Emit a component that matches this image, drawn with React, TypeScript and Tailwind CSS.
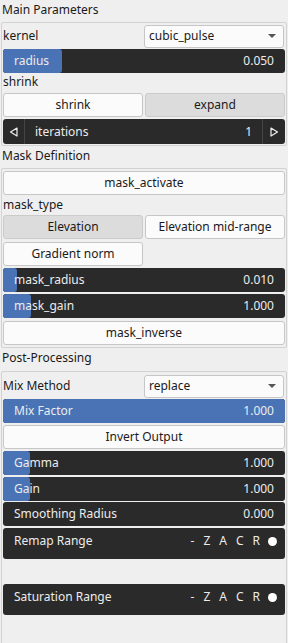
import React from "react";

const Header = ({ children, h = "h-[22px]" }: { children: React.ReactNode; h?: string }) => (
  <div className={`${h} px-[2px] pt-[2px] leading-[16px] text-[#1a1a1a]`}>{children}</div>
);

const Group = ({ children, className = "" }: { children: React.ReactNode; className?: string }) => (
  <div className={`mx-[1px] border border-[#d2d2d2] rounded-[2px] px-[1px] flex flex-col ${className}`}>{children}</div>
);

const Button = ({ children, pressed = false, className = "" }: { children: React.ReactNode; pressed?: boolean; className?: string }) => (
  <div
    className={`h-[24px] flex items-center justify-center rounded-[3px] border ${
      pressed ? "bg-[#dcdcdc] border-[#cbcbcb]" : "bg-[#fbfbfb] border-[#c6c6c6]"
    } text-[#1a1a1a] ${className}`}
  >
    {children}
  </div>
);

const Slider = ({ label, value, fill }: { label: string; value: string; fill: number }) => (
  <div className="relative h-[24px] rounded-[3px] bg-[#2a2a2a] overflow-hidden flex items-center text-[#ececec]">
    <div className="absolute left-0 top-0 bottom-0 bg-[#4a73b5] rounded-[3px]" style={{ width: fill }} />
    <span className="relative pl-[11px]">{label}</span>
    <span className="relative ml-auto pr-[11px]">{value}</span>
  </div>
);

const Combo = ({ label, value }: { label: string; value: string }) => (
  <div className="h-[24px] flex items-center">
    <span className="flex-1 pl-[0px] text-[#1a1a1a]">{label}</span>
    <div className="w-[140px] h-[23px] mr-[1px] rounded-[3px] border border-[#c6c6c6] bg-[#fbfbfb] flex items-center pl-[4px] pr-[7px] text-[#1a1a1a]">
      <span className="flex-1">{value}</span>
      <svg width="8" height="5" viewBox="0 0 8 5">
        <path d="M0 0 L8 0 L4 4 Z" fill="#555" />
      </svg>
    </div>
  </div>
);

const Range = ({ label }: { label: string }) => (
  <div className="h-[31px] rounded-[3px] bg-[#2a2a2a] flex items-start pt-[5px] text-[#ececec]">
    <span className="pl-[11px] leading-[16px]">{label}</span>
    <span className="ml-auto flex items-center gap-[9px] pr-[8px] leading-[16px]">
      <span>-</span>
      <span>Z</span>
      <span>A</span>
      <span>C</span>
      <span>R</span>
      <span className="w-[9px] h-[9px] rounded-full bg-white inline-block ml-[-1px]" />
    </span>
  </div>
);

export default function App() {
  return (
    <div
      className="w-[288px] h-[643px] bg-[#efefef] overflow-hidden text-[12px]"
      style={{ fontFamily: '"Noto Sans", "Open Sans", sans-serif' }}
    >
      <Header>Main Parameters</Header>
      <Group className="pt-[1px] pb-[1px]">
        <Combo label="kernel" value="cubic_pulse" />
        <div className="mt-[1px]">
          <Slider label="radius" value="0.050" fill={59} />
        </div>
        <div className="h-[20px] leading-[18px] text-[#1a1a1a]">shrink</div>
        <div className="grid grid-cols-2 gap-[2px]">
          <Button>shrink</Button>
          <Button pressed>expand</Button>
        </div>
        <div className="mt-[2px] h-[25px] rounded-[3px] bg-[#2a2a2a] flex items-center text-[#ececec]">
          <div className="w-[22px] h-full flex items-center justify-center border-r border-[#444]">
            <svg width="9" height="10" viewBox="0 0 9 10">
              <path d="M8 1 L1.5 5 L8 9 Z" fill="none" stroke="#f0f0f0" strokeWidth="1.2" strokeLinejoin="round" />
            </svg>
          </div>
          <span className="pl-[10px]">iterations</span>
          <span className="ml-auto pr-[10px]">1</span>
          <div className="w-[23px] h-full flex items-center justify-center border-l border-[#444]">
            <svg width="9" height="10" viewBox="0 0 9 10">
              <path d="M1 1 L7.5 5 L1 9 Z" fill="none" stroke="#f0f0f0" strokeWidth="1.2" strokeLinejoin="round" />
            </svg>
          </div>
        </div>
      </Group>

      <Header>Mask Definition</Header>
      <Group className="pt-[2px] pb-[2px]">
        <Button>mask_activate</Button>
        <div className="h-[20px] leading-[20px] text-[#1a1a1a]">mask_type</div>
        <div className="grid grid-cols-2 gap-x-[2px] gap-y-[3px]">
          <Button pressed>Elevation</Button>
          <Button>Elevation mid-range</Button>
          <Button className="h-[23px]">Gradient norm</Button>
        </div>
        <div className="mt-[2px] flex flex-col gap-[2px]">
          <Slider label="mask_radius" value="0.010" fill={14} />
          <Slider label="mask_gain" value="1.000" fill={28} />
        </div>
        <div className="mt-[3px]">
          <Button className="h-[23px]">mask_inverse</Button>
        </div>
      </Group>

      <Header h="h-[23px]">Post-Processing</Header>
      <Group className="pt-[2px] h-[274px]">
        <Combo label="Mix Method" value="replace" />
        <div className="mt-[1px] flex flex-col gap-[2px]">
          <Slider label="Mix Factor" value="1.000" fill={282} />
          <Button>Invert Output</Button>
          <Slider label="Gamma" value="1.000" fill={27} />
          <Slider label="Gain" value="1.000" fill={27} />
        </div>
        <div className="mt-[1px] flex flex-col gap-[2px]">
          <Slider label="Smoothing Radius" value="0.000" fill={0} />
          <Range label="Remap Range" />
        </div>
        <div className="mt-[25px]">
          <Range label="Saturation Range" />
        </div>
      </Group>
    </div>
  );
}
